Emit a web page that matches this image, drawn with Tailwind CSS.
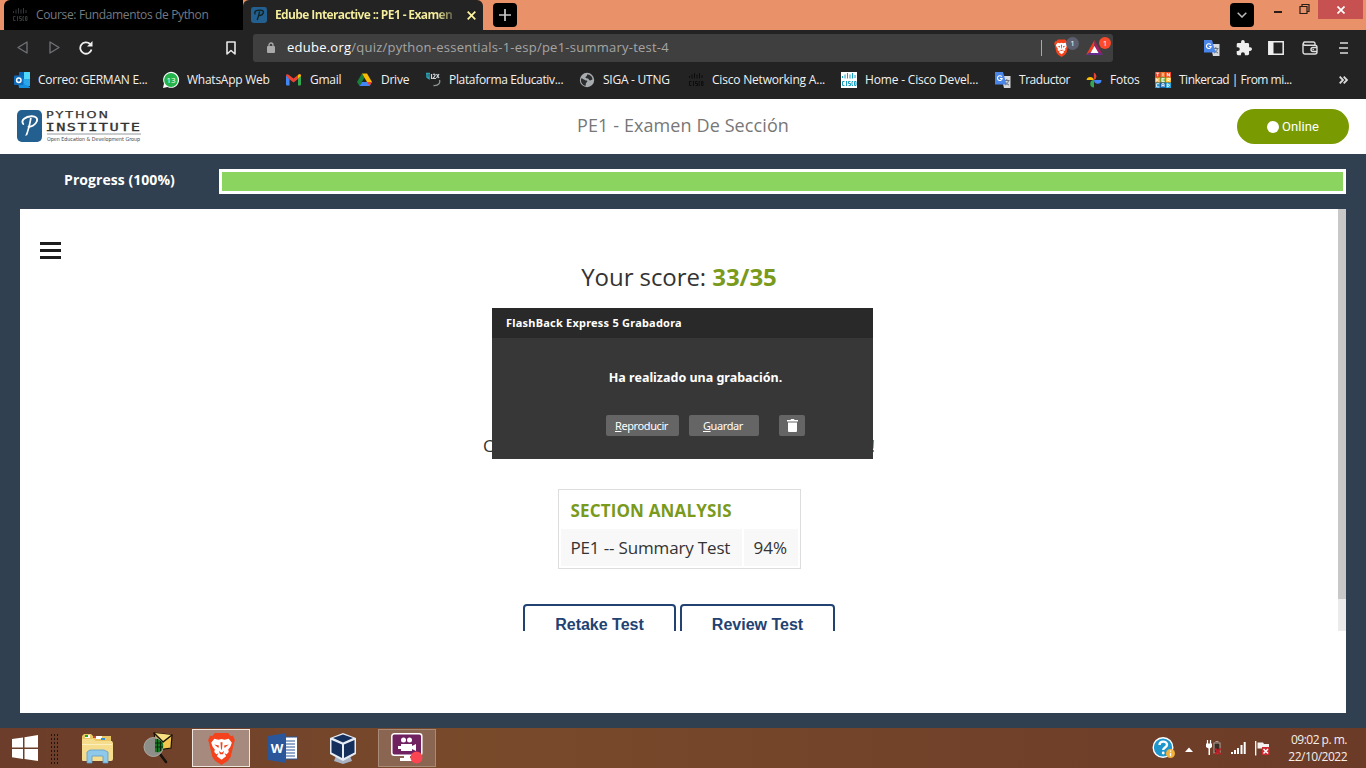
<!DOCTYPE html>
<html lang="es">
<head>
<meta charset="utf-8">
<title>Edube Interactive :: PE1 - Examen</title>
<script src="https://cdn.jsdelivr.net/npm/@tailwindcss/browser@4"></script>
</head>
<body class="w-[1366px] h-[768px] overflow-hidden bg-[#304050] font-['Open_Sans','Noto_Sans',sans-serif]">
<svg class="hidden">
  <symbol id="cisco" viewBox="0 0 16 16"><path d="M1.500 4v2M4 2.500v4M6.500 1v5.500M9 2.500v4M11.500 1v5.500M14 3v3" stroke="currentColor" stroke-width="1" fill="none"/><path d="M3.500 9.500H1.500v4h2M5.500 9v5M9.500 9.500h-2v2h2v2h-2M12 9.500h-1v4h1M13.500 9.500h1.500v4h-1.500z" stroke="currentColor" stroke-width="1" fill="none"/></symbol>
  <symbol id="translate" viewBox="0 0 16 16"><path d="M6 4h9.500v12H9z" fill="#d5d8dc"/><path d="M9 8.500h5.500M11.800 7v1.500M13.500 8.500c-.5 2.500-2 4-3.500 4.500M10.500 10c1 1.500 2 2.500 3.500 3" stroke="#68727c" stroke-width="1" fill="none"/><path d="M0 0h8l3.500 12.500H0z" fill="#4a86e8"/><path d="M6.800 4.700A2.400 2.400 0 1 0 7.200 6.500H5" stroke="#fff" stroke-width="1.100" fill="none"/></symbol>
  <symbol id="lion" viewBox="0 0 26 32"><path d="M6.500 1h13l2.500 3 2-.5 2 4.500-1 3-3 13-3 4-6 4-6-4-3-4-3-13-1-3 2-4.500L4 4z" fill="#f4431c"/><path d="M6 6.500l4 1 3-.8 3 .8 4-1 3 4-1.500 4-2 2.500.5 2.500-2 2-2-1 1.500 3-4.500 3.500-4.500-3.500 1.500-3-2 1-2-2 .5-2.500-2-2.500L3 10.500z" fill="#fff"/><path d="M6 12l4.500 1-.5 2.500zM20 12l-4.500 1 .5 2.500zM10.500 18.500l2.500 1.500 2.500-1.500-1 3h-3zM12 10h2l-.5 7h-1z" fill="#f4431c"/></symbol>
  <symbol id="pmark" viewBox="0 0 26 32"><rect width="26" height="32" rx="5" fill="#23608f"/><path d="M13.500 8c-1 6-2.500 12-5 18l2.300-1c2-5.500 3.500-11 4.500-17" fill="#fff"/><path d="M6.500 14C3.500 10 9 6.500 15 6.300c4.500-.2 7 2 5.500 5.200-1.500 3.500-5.500 5.500-8.500 5.300" fill="none" stroke="#fff" stroke-width="1.900" stroke-linecap="round"/></symbol>
</svg>

<div class="flex flex-col h-full">
  <!-- tab strip -->
  <div class="flex h-[30px] bg-[#e99168] pl-1 text-[12px] leading-[30px]">
    <div class="flex w-[239px] items-center bg-black text-[#747a80] rounded-tl-md pl-2">
      <svg class="w-4 h-4 mr-2 text-[#35383a]"><use href="#cisco"/></svg>
      <span class="whitespace-nowrap tracking-[-0.36px]">Course: Fundamentos de Python</span>
    </div>
    <div class="flex w-[240px] items-center bg-[#232323] rounded-t-md pl-2">
      <svg class="w-4 h-4 mr-2" viewBox="0 0 26 26"><rect width="26" height="26" rx="4" fill="#23608f"/><path d="M14 7c-1 5-2 9-4 14M7 12C4 6 10 5 15 5c9 0 5 10-3 9" fill="none" stroke="#122" stroke-width="2.200"/></svg>
      <span class="w-[180px] whitespace-nowrap font-bold tracking-[-0.62px] bg-linear-to-r from-[#f5ee9c] from-90% to-[#4a4838] bg-clip-text text-transparent">Edube Interactive :: PE1 - Examen</span>
      <svg class="w-[9px] h-[9px] ml-3" viewBox="0 0 9 9"><path d="M.7.7l7.600 7.600M8.300.7L.7 8.300" stroke="#fdf5a0" stroke-width="1.700"/></svg>
    </div>
    <div class="ml-[10px] mt-[3px] grid h-6 w-6 place-items-center rounded bg-black">
      <svg class="w-3 h-3" viewBox="0 0 12 12"><path d="M6 0v12M0 6h12" stroke="#c9c9c9" stroke-width="1.700"/></svg>
    </div>
    <div class="ml-auto mt-[3px] grid h-6 w-6 place-items-center rounded bg-black">
      <svg class="w-[10px] h-[6px]" viewBox="0 0 10 6"><path d="M.7.700L5 5 9.300.700" stroke="#bbb" stroke-width="1.500" fill="none"/></svg>
    </div>
    <svg class="ml-[20px] w-[8px] h-5" viewBox="0 0 8 20"><path d="M0 12h8" stroke="#2a1d17" stroke-width="2"/></svg>
    <svg class="ml-[17px] w-[11px] h-5" viewBox="0 0 11 20"><path d="M1 6.500h7v7H1zM3 6V4.500h7v7H8.500" stroke="#2a1d17" stroke-width="1.200" fill="none"/></svg>
    <div class="ml-[8px] mr-[3px] grid h-[19px] w-[45px] place-items-center bg-[#c75050]">
      <svg class="w-2 h-2" viewBox="0 0 8 8"><path d="M.5.500l7 7M7.500.500l-7 7" stroke="#fff" stroke-width="1.700"/></svg>
    </div>
  </div>

  <!-- toolbar -->
  <div class="flex h-[34px] items-center bg-[#232323] pb-[1px] pt-[2px]">
    <svg class="ml-[17px] w-[11px] h-[13px]" viewBox="0 0 11 13"><path d="M10 1v11L1 6.500z" fill="none" stroke="#6f7277" stroke-width="1.300" stroke-linejoin="round"/></svg>
    <svg class="ml-[21px] w-[11px] h-[13px]" viewBox="0 0 11 13"><path d="M1 1v11l9-5.500z" fill="none" stroke="#6f7277" stroke-width="1.300" stroke-linejoin="round"/></svg>
    <svg class="ml-[19px] w-[14px] h-[14px]" viewBox="0 0 14 14"><path d="M12.500 8.500A5.700 5.700 0 1 1 11 3" fill="none" stroke="#f0f0f0" stroke-width="1.800"/><path d="M13.500 0v5.500H8z" fill="#f0f0f0"/></svg>
    <svg class="ml-[133px] w-[10px] h-[14px]" viewBox="0 0 10 14"><path d="M1 1h8v12L5 9.500 1 13z" fill="none" stroke="#e6e6e6" stroke-width="1.600" stroke-linejoin="round"/></svg>
    <div class="ml-[17px] flex h-7 w-[860px] items-center rounded-[3px] bg-[#3f3f3f] text-[13px]">
      <svg class="ml-[14px] w-[8px] h-[11px]" viewBox="0 0 8 11"><rect y="4" width="8" height="7" rx="1" fill="#aaa"/><path d="M2 5V3a2 2 0 0 1 4 0v2" fill="none" stroke="#aaa" stroke-width="1.300"/></svg>
      <span class="ml-3 whitespace-nowrap text-[#a5a5a5] tracking-[0.24px]"><span class="text-white">edube.org</span>/quiz/python-essentials-1-esp/pe1-summary-test-4</span>
      <div class="ml-auto flex h-full items-center">
        <div class="mr-3 h-4 w-px bg-[#a8a8a8]"></div>
        <div class="relative h-[18px] w-[24px]">
          <svg class="w-[15px] h-[18px]"><use href="#lion"/></svg>
          <span class="absolute left-[12px] top-[-2px] grid h-[13px] w-[13px] place-items-center rounded-full bg-[#5d5f6e] text-[8px] text-white">1</span>
        </div>
        <div class="relative ml-[8px] mr-[2px] h-[16px] w-[25px]">
          <svg class="w-[17px] h-[16px]" viewBox="0 0 17 16"><path d="M8.500 0L0 15l8.500-5z" fill="#ef4023"/><path d="M8.500 0L17 15l-8.500-5z" fill="#9e1f63"/><path d="M0 15h17L8.500 9.500z" fill="#662d91"/><path d="M8.500 6l4 7h-8z" fill="#fff"/></svg>
          <span class="absolute left-[13px] top-[-3px] grid h-[12px] w-[12px] place-items-center rounded-full bg-[#fb4a2c] text-[8px] text-white">1</span>
        </div>
      </div>
    </div>
    <svg class="ml-[91px] w-4 h-4"><use href="#translate"/></svg>
    <svg class="ml-4 w-[16px] h-[16px]" viewBox="1 1 22 22"><path d="M20.500 11H19V7a2 2 0 0 0-2-2h-4V3.500a2.500 2.500 0 0 0-5 0V5H4a2 2 0 0 0-2 2v3.800h1.500a2.700 2.700 0 0 1 0 5.400H2V20c0 1.100.9 2 2 2h3.800v-1.500a2.700 2.700 0 0 1 5.400 0V22H17a2 2 0 0 0 2-2v-4h1.500a2.500 2.500 0 0 0 0-5z" fill="#eee"/></svg>
    <svg class="ml-4 w-[16px] h-[14px]" viewBox="0 0 16 14"><path d="M.8.800h14.400v12.400H.8z" fill="none" stroke="#eee" stroke-width="1.500"/><path d="M1 1h4.500v12H1z" fill="#eee"/></svg>
    <svg class="ml-[18px] w-[16px] h-[14px]" viewBox="0 0 16 14"><path d="M13 4V2.500A1.500 1.500 0 0 0 11.500 1h-9a1.700 1.700 0 0 0 0 3.200H13a2 2 0 0 1 2 2V11a2 2 0 0 1-2 2H3a2 2 0 0 1-2-2V2.500M15 6.500h-4a2 2 0 0 0 0 4h4" fill="none" stroke="#ddd" stroke-width="1.400"/><circle cx="11.200" cy="8.500" r=".8" fill="#ddd"/></svg>
    <svg class="ml-[21px] w-[10px] h-[12px]" viewBox="0 0 10 12"><path d="M1 1h8M0 6h9M1 11h8" stroke="#ddd" stroke-width="1.500"/></svg>
  </div>

  <!-- bookmarks -->
  <div class="grid h-[35px] grid-cols-[149px_123px_71px_68px_154px_109px_153px_154px_91px_69px_160px_1fr] items-center bg-[#232323] pl-[14px] pb-[3px] text-[12px] tracking-[-0.25px] text-[#f1f1f1] whitespace-nowrap">
    <div class="flex items-center gap-2"><svg class="w-4 h-4" viewBox="0 0 16 16"><path d="M5 0h11v14H5z" fill="#28a8ea"/><path d="M10 0h6v7h-6z" fill="#50d9ff"/><path d="M5 0h5v7H5z" fill="#0a63b8"/><path d="M4 9l12 6v1H5z" fill="#1490df"/><rect y="3.500" width="9.500" height="9.500" rx="1" fill="#0f6cbd"/><circle cx="4.800" cy="8.200" r="2.200" fill="none" stroke="#fff" stroke-width="1.500"/></svg><span>Correo: GERMAN E...</span></div>
    <div class="flex items-center gap-2"><svg class="w-4 h-4 overflow-visible" viewBox="0 0 16 16"><path d="M0 16l1-4.500A8 8 0 1 1 4.500 15z" fill="#fff"/><circle cx="8" cy="8" r="6.900" fill="#25b34b"/><text x="8" y="11" font-size="8" fill="#fff" text-anchor="middle" letter-spacing="0">13</text></svg><span>WhatsApp Web</span></div>
    <div class="flex items-center gap-2"><svg class="w-4 h-4" viewBox="0 0 16 16"><path d="M0 3.500L3.500 6v7.500H1a1 1 0 0 1-1-1z" fill="#4285f4"/><path d="M12 6l3-2.500v9a1 1 0 0 1-1 1h-2z" fill="#34a853"/><path d="M0 3.500C0 2 2 2 3 3l4.500 3.500L12 3c1-1 3-1 3 .5L12 7l-4.500 3.500L3 7z" fill="#ea4335"/><path d="M12 3c1-1 3-1 3 1l-3 2.500z" fill="#fbbc04"/></svg><span>Gmail</span></div>
    <div class="flex items-center gap-2"><svg class="w-4 h-4" viewBox="0 0 16 16"><path d="M5 1.500L0 10l2.500 4 5-8.500z" fill="#188038"/><path d="M5 1.500h5l5 8.500h-5z" fill="#fbbc04"/><path d="M5 10h10l-2.500 4h-10z" fill="#4285f4"/><path d="M12.500 14L10 10h5z" fill="#ea4335"/></svg><span>Drive</span></div>
    <div class="flex items-center gap-2"><svg class="w-4 h-4" viewBox="0 0 16 16"><path d="M1 1.500h4M2 1v4l2 1.500V2.500" stroke="#2ba3b5" stroke-width="1.500" fill="none"/><path d="M6.500 2v5M8 2.500c1.500-1 3 0 1.500 2L8 6.500h3M11.500 2l2.500 4M14 2l-2.500 4" stroke="#ccd6da" stroke-width="1.200" fill="none"/><path d="M14.500 8c1 3-1 6-6 5.500" stroke="#8c9496" stroke-width="1.300" fill="none"/></svg><span class="tracking-[-0.33px]">Plataforma Educativ...</span></div>
    <div class="flex items-center gap-2"><svg class="w-4 h-4" viewBox="0 0 16 16"><circle cx="8" cy="8" r="7.200" fill="#a8acaf"/><path d="M2 6.500c3 0 3 2 6 2 1 1-.5 2-1 2.500L6.500 14C3 13 1.500 10 2 6.500zM8 2.500c3 0 5.500 2 5.500 5-1.500.5-2 1.500-3.500.5 0-2-2.500-1-3.500-2.500C6.500 4 8.500 4.500 8 2.500z" fill="#2b2d2e"/></svg><span>SIGA - UTNG</span></div>
    <div class="flex items-center gap-2"><svg class="w-4 h-4 text-[#0c0c0c]"><use href="#cisco"/></svg><span class="tracking-[-0.2px]">Cisco Networking A...</span></div>
    <div class="flex items-center gap-2"><svg class="w-4 h-4 bg-white text-[#18a0c4]"><use href="#cisco"/></svg><span class="tracking-[-0.18px]">Home - Cisco Devel...</span></div>
    <div class="flex items-center gap-2"><svg class="w-4 h-4"><use href="#translate"/></svg><span class="tracking-[-0.45px]">Traductor</span></div>
    <div class="flex items-center gap-2"><svg class="w-4 h-4" viewBox="0 0 16 16"><path d="M7.800 8V.500a4 4 0 0 1 0 7.500z" fill="#ea4335"/><path d="M7.800 8H.500a3.700 3.700 0 0 1 7.300 0z" fill="#fbbc04"/><path d="M8 8h7.500a3.700 3.700 0 0 1-7.500 0z" fill="#4285f4"/><path d="M8 8v7.500A3.700 3.700 0 0 1 8 8z" fill="#34a853"/></svg><span>Fotos</span></div>
    <div class="flex items-center gap-2"><svg class="w-4 h-4" viewBox="0 0 15 15"><path fill="#f03b24" d="M0 0h5v5H0z"/><path fill="#f5742a" d="M5 0h5v5H5z"/><path fill="#ef4e2a" d="M10 0h5v5h-5z"/><path fill="#f9a51a" d="M0 5h5v5H0z"/><path fill="#7ab648" d="M5 5h5v5H5z"/><path fill="#f6b31f" d="M10 5h5v5h-5z"/><path fill="#1a8fcf" d="M0 10h5v5H0z"/><path fill="#1565b5" d="M5 10h5v5H5z"/><path fill="#23a5de" d="M10 10h5v5h-5z"/><path d="M1 1h3M2.500 1v3M7.500 1v3M11.500 4V1l2 3V1M1.500 6v3M4 6L2 7.500 4 9M9 6H6.500v3H9M6.500 7.500h2M11.500 9V6H14v1.500h-2L14 9M4 11H1.500v3H4M6.500 14v-3h2v3M6.500 12.700h2M11.500 11v3l2-1v-1z" stroke="#fff" stroke-width=".8" fill="none"/></svg><span class="tracking-[-0.5px]">Tinkercad | From mi...</span></div>
    <svg class="ml-[24px] w-[9px] h-[8px]" viewBox="0 0 9 8"><path d="M.7.700L4 4 .7 7.300M4.700.700L8 4 4.700 7.300" fill="none" stroke="#ddd" stroke-width="1.800"/></svg>
  </div>

  <!-- site header -->
  <header class="flex h-[55px] items-center bg-white pb-[1px]">
    <div class="flex w-[237px] pl-[17px]">
      <svg class="w-[25px] h-8" viewBox="0 0 26 32" preserveAspectRatio="none"><use href="#pmark"/></svg>
      <svg class="ml-1 w-[97px] h-8 overflow-visible" viewBox="0 0 97 32"><g fill="#333" font-family="DejaVu Sans"><text x="0" y="8" font-size="9.500" stroke="#333" stroke-width=".25" letter-spacing="1.500" textLength="64" lengthAdjust="spacingAndGlyphs">PYTHON</text><text x="-.5" y="20.500" font-size="10.500" letter-spacing="1" textLength="96" font-family="DejaVu Sans Mono" stroke="#333" stroke-width=".3" lengthAdjust="spacingAndGlyphs">INSTITUTE</text><path d="M1 24h94" stroke="#7a8288" stroke-width=".8"/><text x="1" y="31" font-size="5.500" textLength="93" lengthAdjust="spacingAndGlyphs" fill="#444">Open Education &amp; Development Group</text></g></svg>
    </div>
    <h1 class="flex-1 text-center text-[18px] text-[#777] pr-[108px] pb-[2px]"><span class="tracking-[0.1px]">PE1 - Examen De Sección</span></h1>
    <button class="mr-[17px] mt-[1px] flex h-[35px] w-[112px] items-center justify-center gap-[3px] rounded-full bg-[#7a9a01] font-['Roboto'] text-[13px] tracking-[0.1px] text-white"><span class="h-[12px] w-[12px] rounded-full bg-white"></span>Online</button>
  </header>

  <!-- quiz -->
  <main class="relative flex-1 px-5 pt-[15px] pb-[15px] flex flex-col">
    <div class="flex h-[25px] shrink-0">
      <div class="w-[199px] text-center text-[14px] font-bold leading-[22px] text-white tracking-[0.05px]">Progress (100%)</div>
      <div class="flex-1 border-[3px] border-white bg-[#8bd45f]"></div>
    </div>
    <section class="mt-[15px] flex-1 bg-white">
      <div class="flex h-[422px] overflow-hidden">
        <div class="flex flex-1 flex-col items-center">
          <svg class="ml-5 mt-[33px] h-[18px] w-[21px] shrink-0 self-start" viewBox="0 0 21 18"><path d="M0 1.500h21M0 8.500h21M0 15.500h21" stroke="#1d1d1d" stroke-width="3"/></svg>
          <div class="text-[24px] leading-[34px] text-[#333] tracking-[-0.07px]">Your score: <b class="text-[#7a9a1c]">33/35</b></div>
          <div class="mt-[140px] flex w-[392px] justify-between text-[17px] leading-[24px] text-[#333]"><span>C</span><span>!</span></div>
          <div class="mt-[31px] h-[80px] w-[243px] shrink-0 border border-[#ddd] p-[2px] text-[17px] text-[#333]">
            <div class="h-[36px] pl-[10px] text-[17px] font-bold leading-[37px] text-[#7a9a1c] tracking-[0.15px]">SECTION ANALYSIS</div>
            <div class="mt-[1px] flex gap-[2px] leading-[37px]"><span class="w-[181px] whitespace-nowrap bg-[#f8f8f8] pl-[10px] tracking-[-0.16px]">PE1 -- Summary Test</span><span class="flex-1 bg-[#f8f8f8] pl-[10px]">94%</span></div>
          </div>
          <div class="mt-[35px] flex shrink-0 gap-1 font-['Liberation_Sans'] text-[16px] font-bold leading-[37px] text-[#224272]">
            <div class="h-[45px] w-[153px] rounded border-2 border-[#224272] text-center">Retake Test</div>
            <div class="h-[45px] w-[155px] rounded border-2 border-[#224272] text-center">Review Test</div>
          </div>
        </div>
        <div class="w-2 bg-[#ebebeb]"><div class="h-[390px] bg-[#c8c8c8]"></div></div>
      </div>
    </section>

    <!-- recorder dialog -->
    <div class="absolute left-[492px] top-[154px] h-[151px] w-[381px] bg-[#373737] font-['Noto_Sans'] text-white">
      <div class="h-[30px] bg-[#292929] pl-[14px] text-[11px] font-bold leading-[30px] tracking-[0.22px]">FlashBack Express 5 Grabadora</div>
      <div class="mt-[30px] pl-[26px] text-center text-[12.500px] font-bold leading-5">Ha realizado una grabación.</div>
      <div class="mt-[27px] ml-[114px] flex text-center text-[11px] leading-[21px] tracking-[-0.4px]">
        <div class="h-[21px] w-[73px] rounded-[2px] bg-[#656565] pr-[2px]"><u>R</u>eproducir</div>
        <div class="ml-[10px] h-[21px] w-[70px] rounded-[2px] bg-[#656565] pr-[2px]"><u>G</u>uardar</div>
        <div class="ml-[20px] grid h-[21px] w-[26px] place-items-center rounded-[2px] bg-[#656565]"><svg class="w-[11px] h-[13px]" viewBox="0 0 11 13"><path d="M0 1h3.500l.5-1h3l.5 1H11v1.500H0zM1 3.500h9V12a1 1 0 0 1-1 1H2a1 1 0 0 1-1-1z" fill="#fff"/></svg></div>
      </div>
    </div>
  </main>

  <!-- taskbar -->
  <footer class="flex h-10 items-center bg-linear-to-r from-[#6b3d2a] via-[#794a2a] via-35% to-[#6b3b28]">
    <svg class="ml-3 w-[26px] h-[26px]" viewBox="0 0 26 26"><path d="M0 4l11-1.600v10H0zM12.500 2.200L26 0v12.400H12.500zM0 14h11v10L0 22.200zM12.500 14H26v12l-13.500-2z" fill="#fff"/></svg>
    <div class="ml-3 h-[31px] w-[9px] bg-[radial-gradient(#22130d_32%,transparent_35%)] bg-[size:3px_4px]"></div>
    <svg class="ml-[22px] w-[32px] h-[32px]" viewBox="0 0 32 32"><path d="M1 4l2-2h7l2 2h18v5H1z" fill="#e9c764"/><path d="M4 3h5v3H4zM15 4h6v3h-6z" fill="#fff"/><path d="M4 3h3v2H4z" fill="#2a2"/><path d="M12 4h3v2h-3z" fill="#c43"/><path d="M20 6h4v2h-4z" fill="#3b8fd0"/><path d="M1 7h11l3 2h16l1 2v16a2 2 0 0 1-2 2H2a1 1 0 0 1-1-1z" fill="#f5dd8d"/><path d="M1 12h30v1H1z" fill="#fbefbf"/><path d="M6 31V20l3-2h14l4 2v11h-5v-7H11v7z" fill="#8fc9ea" stroke="#5a9ccb" stroke-width=".8"/></svg>
    <svg class="ml-[30px] w-[32px] h-[32px]" viewBox="0 0 32 32"><path d="M11 1l18 2-1 13-14 2z" fill="#f1c84d" stroke="#1a1208" stroke-width="1.200"/><path d="M11 1l9 9 9-7" fill="#f8df82" stroke="#1a1208" stroke-width="1.500"/><path d="M17 22l6 8" stroke="#19130f" stroke-width="2.600" stroke-linecap="round"/><circle cx="10.500" cy="15" r="9.500" fill="#8d8f88" stroke="#aaa9a2"/><path d="M12 7c6 0 9 3 8 8s-4 6-8 5z" fill="#147a22"/><path d="M12 11h7M12 15h8M14.500 7v13M17.500 9v10" stroke="#06280b" stroke-width="1"/></svg>
    <div class="ml-[17px] grid h-[38px] w-[58px] place-items-center border border-[#f0e6e0] bg-[#a58a7d]"><svg class="w-[27px] h-[33px]"><use href="#lion"/></svg></div>
    <svg class="ml-[18px] w-[30px] h-[30px]" viewBox="0 0 30 30"><path d="M15 4h14.500v22H15z" fill="#fff" stroke="#2b579a"/><path d="M18 8h9M18 11h9M18 14h9M18 17h9M18 20h9M18 23h9" stroke="#2b579a" stroke-width="1.200"/><path d="M0 3l18-3v30L0 27z" fill="#2b579a"/><text x="9" y="20" text-anchor="middle" font-size="13" font-weight="bold" fill="#fff">W</text></svg>
    <svg class="ml-[31px] w-[28px] h-[32px]" viewBox="0 0 28 32"><path d="M7 24h14l2 5-9 3-9-3z" fill="#a9b3c4"/><path d="M14 1l13 5v16l-13 7L1 22V6z" fill="#e6ecf5"/><path d="M14 2.500L24 6l-10 4.500L4 6zM2.500 8L13 12.500v13.500L2.500 20.500zM25.500 8L15 12.500V26l10.500-5.500z" fill="#152f5c"/></svg>
    <div class="ml-[21px] grid h-[38px] w-[58px] place-items-center border border-[#a88a78] bg-[#8a6652]"><svg class="w-[32px] h-[32px]" viewBox="0 0 32 32"><path d="M9 26h14v3H9zM13 22h6v5h-6z" fill="#fff"/><rect x=".8" y="1.800" width="30" height="21.500" rx="2.500" fill="#70215f" stroke="#fff" stroke-width="1.500"/><circle cx="12.500" cy="8" r="2.500" fill="#fff"/><circle cx="18.500" cy="8" r="2.500" fill="#fff"/><path d="M10 12h11v2l4-2v7l-4-2v2H10v-2H7v-3h3z" fill="#fff"/><circle cx="25.500" cy="25.500" r="6" fill="#fa4552"/></svg></div>
    <svg class="ml-auto w-[23px] h-[22px]" viewBox="0 0 23 22"><circle cx="11" cy="10.500" r="9.800" fill="#1e96cb" stroke="#fff" stroke-width="1.400"/><path d="M7.500 8c0-4.500 7.500-4.500 7.500-.3C15 10.500 11.200 10.500 11.200 13" fill="none" stroke="#fff" stroke-width="2.400"/><circle cx="11.200" cy="16" r="1.400" fill="#fff"/><circle cx="18.500" cy="16.500" r="4.500" fill="#f3b13c"/><path d="M18.500 13.500v1.300M18.500 15.800v3.500" stroke="#fff" stroke-width="1.300"/></svg>
    <svg class="ml-[10px] mt-[2px] w-[8px] h-[5px]" viewBox="0 0 8 5"><path d="M0 5l4-4.500L8 5z" fill="#fff"/></svg>
    <svg class="ml-[13px] w-[16px] h-[16px]" viewBox="0 0 16 16"><path d="M1.500 0v4M4.500 0v4" stroke="#fff" stroke-width="1.200"/><path d="M0 3.500h6V7L4 8.500V15H2.500V8.500L0 7z" fill="#fff"/><path d="M8 3h6v10H8zM9.500 1.500h3" stroke="#aaa097" stroke-width="1.100" fill="#3b2a22"/><path d="M9 8.500l5.500 6M14.500 8.500l-5.500 6" stroke="#b81f26" stroke-width="2.200"/></svg>
    <svg class="ml-[9px] w-[15px] h-[12px]" viewBox="0 0 15 12"><path d="M0 10h2v2H0zM3 8h2v4H3zM6 6h2v6H6zM9.500 3h2v9h-2zM12.700 0h2v12h-2z" fill="#fff"/></svg>
    <svg class="ml-[9px] w-[15px] h-[15px]" viewBox="0 0 15 15"><path d="M.7 0v14.500" stroke="#fff" stroke-width="1.300"/><path d="M2.500 1.500H8l1 1.500h5v6H8.500l-1-1.500h-5z" fill="#f5f1ee"/><path d="M7 6h7.500v8H7z" fill="#cc2b33"/><path d="M8.500 8l4.500 4.500M13 8l-4.500 4.500" stroke="#fff" stroke-width="1.500"/></svg>
    <div class="ml-[17px] mr-[19px] w-[60px] whitespace-nowrap text-right text-[12px] leading-[17px] tracking-[-0.5px] text-[#f6eee9]">09:02 p. m.<br>22/10/2022</div>
  </footer>
</div>
</body>
</html>
